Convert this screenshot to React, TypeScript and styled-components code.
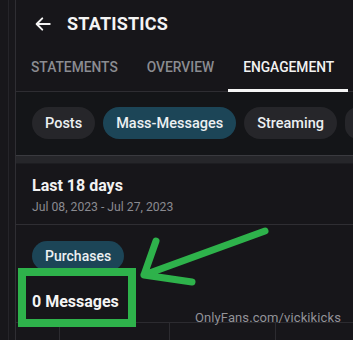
import React from "react";
import styled, { createGlobalStyle } from "styled-components";

const Global = createGlobalStyle`
  html, body {
    margin: 0;
    padding: 0;
    background: #17161a;
    font-family: Roboto, "Liberation Sans", Arial, sans-serif;
    color: #f2f2f2;
  }
`;

const Page = styled.div`
  position: relative;
  display: flex;
  width: 353px;
  height: 340px;
  overflow: hidden;
  background: #17161a;
`;

const Rail = styled.div`
  width: 15px;
  flex-shrink: 0;
  border-right: 1px solid #2f2e33;
  background: linear-gradient(
    to right,
    #18171b 0,
    #18171b 8px,
    #26252a 8px,
    #26252a 9px,
    #18171b 9px
  );
`;

const Main = styled.div`
  flex: 1;
  display: flex;
  flex-direction: column;
  min-width: 0;
`;

const Header = styled.div`
  height: 47px;
  display: flex;
  align-items: center;
  gap: 15px;
  padding-left: 18px;
`;

const Title = styled.h1`
  margin: 0;
  font-size: 18px;
  font-weight: 700;
  letter-spacing: 0.2px;
  color: #f4f4f4;
`;

const Tabs = styled.div`
  display: flex;
  height: 44px;
  border-bottom: 1px solid #2e2d32;
  white-space: nowrap;
`;

const Tab = styled.div<{ $active?: boolean }>`
  position: relative;
  display: flex;
  align-items: center;
  padding: 0 14px 4px 15px;
  font-size: 13.8px;
  font-weight: 500;
  text-transform: uppercase;
  color: ${(p) => (p.$active ? "#f2f2f2" : "#8b8c91")};

  &::after {
    content: "";
    display: ${(p) => (p.$active ? "block" : "none")};
    position: absolute;
    left: 0;
    right: 0;
    bottom: -1px;
    height: 3px;
    background: #f5f5f5;
  }
`;

const ChipRow = styled.div`
  display: flex;
  gap: 8px;
  padding: 15px 0 0 16px;
  height: 48px;
  background: #141518;
  white-space: nowrap;
`;

const Chip = styled.div<{ $active?: boolean }>`
  flex-shrink: 0;
  height: 32px;
  display: flex;
  align-items: center;
  padding: 0 13px;
  border-radius: 16px;
  font-size: 14.5px;
  font-weight: 500;
  background: ${(p) => (p.$active ? "#1c4557" : "#26262a")};
  color: #ecf0f2;
`;

const Separator = styled.div`
  height: 7px;
  background: #26262a;
  border-top: 1px solid #3a3a3f;
  border-bottom: 1px solid #1d1d21;
`;

const Period = styled.div`
  padding: 12px 16px 0;
  height: 48px;
  border-bottom: 1px solid #2f2e33;
`;

const PeriodTitle = styled.div`
  font-size: 16px;
  font-weight: 700;
  line-height: 20px;
  color: #f2f2f2;
`;

const PeriodDates = styled.div`
  margin-top: 4px;
  font-size: 12.2px;
  color: #8a8a90;
`;

const Stats = styled.div`
  padding: 16px 16px 0;
  display: flex;
  flex-direction: column;
  align-items: flex-start;
`;

const SmallChip = styled(Chip)`
  height: 30px;
  font-size: 14px;
`;

const Count = styled.div`
  margin-top: 21px;
  font-size: 16px;
  font-weight: 700;
  color: #f4f4f4;
`;

const Chart = styled.div`
  margin-top: 11px;
  flex: 1;
  display: grid;
  grid-template-columns: 44px 110px 106px 1fr;
  border-top: 1px solid #2c2b30;
`;

const ChartCol = styled.div`
  border-right: 1px solid #2c2b30;

  &:last-child {
    border-right: none;
  }
`;

const Watermark = styled.div`
  position: absolute;
  left: 195px;
  top: 310px;
  font-size: 13px;
  color: rgba(190, 190, 195, 0.75);
  letter-spacing: 0.1px;
`;

const Highlight = styled.div`
  position: absolute;
  left: 18px;
  top: 268px;
  width: 102px;
  height: 43px;
  border: 8px solid #2eb24b;
`;

const Annotation = styled.svg`
  position: absolute;
  left: 0;
  top: 0;
  pointer-events: none;
`;

const BackArrow = () => (
  <svg width="18" height="18" viewBox="0 0 24 24" fill="none">
    <path
      d="M21 12H4M11 4.5L3.5 12L11 19.5"
      stroke="#f4f4f4"
      strokeWidth="2.6"
      strokeLinecap="round"
      strokeLinejoin="round"
    />
  </svg>
);

export default function App() {
  return (
    <>
      <Global />
      <Page>
        <Rail />
        <Main>
          <Header>
            <BackArrow />
            <Title>STATISTICS</Title>
          </Header>
          <Tabs>
            <Tab>Statements</Tab>
            <Tab>Overview</Tab>
            <Tab $active>Engagement</Tab>
          </Tabs>
          <ChipRow>
            <Chip>Posts</Chip>
            <Chip $active>Mass-Messages</Chip>
            <Chip>Streaming</Chip>
            <Chip aria-hidden />
          </ChipRow>
          <Separator />
          <Period>
            <PeriodTitle>Last 18 days</PeriodTitle>
            <PeriodDates>Jul 08, 2023 - Jul 27, 2023</PeriodDates>
          </Period>
          <Stats>
            <SmallChip $active>Purchases</SmallChip>
            <Count>0 Messages</Count>
          </Stats>
          <Chart>
            <ChartCol />
            <ChartCol />
            <ChartCol />
            <ChartCol />
          </Chart>
        </Main>
        <Watermark>OnlyFans.com/vickikicks</Watermark>
        <Highlight />
        <Annotation width="353" height="340" viewBox="0 0 353 340">
          <path
            d="M265 231L144 275M156 241L144 275L192 282"
            stroke="#2eb24b"
            strokeWidth="7"
            strokeLinecap="round"
            strokeLinejoin="round"
            fill="none"
          />
        </Annotation>
      </Page>
    </>
  );
}
